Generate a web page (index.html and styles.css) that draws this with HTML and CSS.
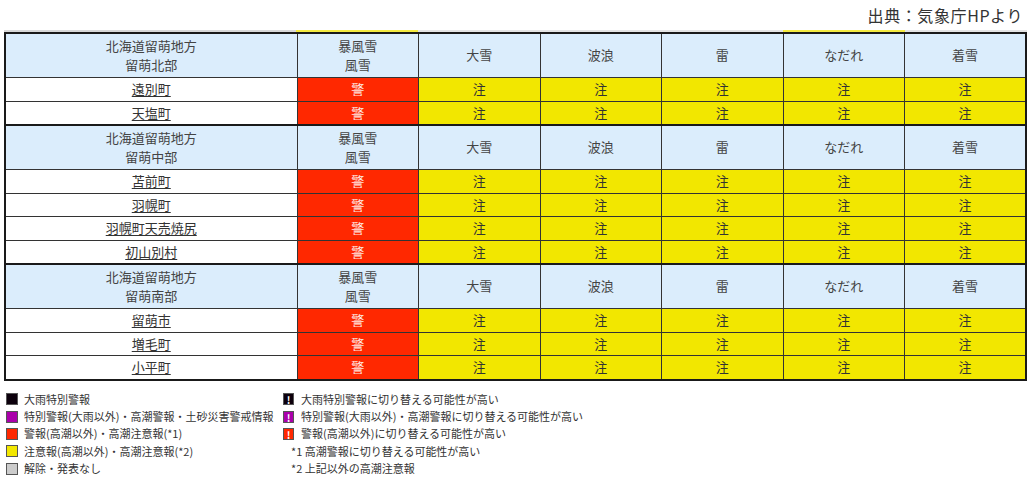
FILE: index.html
```html
<!DOCTYPE html>
<html lang="ja">
<head>
<meta charset="utf-8">
<link rel="stylesheet" href="styles.css">
</head>
<body>
<div class="page">
  <div class="source">出典：気象庁HPより</div>
  <div class="strip">
    <span class="s1"></span><span class="s2 y"></span><span class="s3"></span><span class="s3"></span><span class="s3"></span><span class="s2 y"></span><span class="s3"></span>
  </div>
  <table class="wt">
    <colgroup><col class="c-area"><col><col><col><col><col><col></colgroup>
    <tbody>
      <tr class="hd first">
        <td>北海道留萌地方<br>留萌北部</td><td>暴風雪<br>風雪</td><td>大雪</td><td>波浪</td><td>雷</td><td>なだれ</td><td>着雪</td>
      </tr>
      <tr class="row"><td class="town"><a>遠別町</a></td><td class="w">警</td><td class="a">注</td><td class="a">注</td><td class="a">注</td><td class="a">注</td><td class="a">注</td></tr>
      <tr class="row"><td class="town"><a>天塩町</a></td><td class="w">警</td><td class="a">注</td><td class="a">注</td><td class="a">注</td><td class="a">注</td><td class="a">注</td></tr>
      <tr class="hd">
        <td>北海道留萌地方<br>留萌中部</td><td>暴風雪<br>風雪</td><td>大雪</td><td>波浪</td><td>雷</td><td>なだれ</td><td>着雪</td>
      </tr>
      <tr class="row"><td class="town"><a>苫前町</a></td><td class="w">警</td><td class="a">注</td><td class="a">注</td><td class="a">注</td><td class="a">注</td><td class="a">注</td></tr>
      <tr class="row"><td class="town"><a>羽幌町</a></td><td class="w">警</td><td class="a">注</td><td class="a">注</td><td class="a">注</td><td class="a">注</td><td class="a">注</td></tr>
      <tr class="row"><td class="town"><a>羽幌町天売焼尻</a></td><td class="w">警</td><td class="a">注</td><td class="a">注</td><td class="a">注</td><td class="a">注</td><td class="a">注</td></tr>
      <tr class="row"><td class="town"><a>初山別村</a></td><td class="w">警</td><td class="a">注</td><td class="a">注</td><td class="a">注</td><td class="a">注</td><td class="a">注</td></tr>
      <tr class="hd">
        <td>北海道留萌地方<br>留萌南部</td><td>暴風雪<br>風雪</td><td>大雪</td><td>波浪</td><td>雷</td><td>なだれ</td><td>着雪</td>
      </tr>
      <tr class="row"><td class="town"><a>留萌市</a></td><td class="w">警</td><td class="a">注</td><td class="a">注</td><td class="a">注</td><td class="a">注</td><td class="a">注</td></tr>
      <tr class="row"><td class="town"><a>増毛町</a></td><td class="w">警</td><td class="a">注</td><td class="a">注</td><td class="a">注</td><td class="a">注</td><td class="a">注</td></tr>
      <tr class="row"><td class="town"><a>小平町</a></td><td class="w">警</td><td class="a">注</td><td class="a">注</td><td class="a">注</td><td class="a">注</td><td class="a">注</td></tr>
    </tbody>
  </table>
  <div class="legend">
    <ul class="lg-col left">
      <li><span class="sw k"></span>大雨特別警報</li>
      <li><span class="sw p"></span>特別警報(大雨以外)・高潮警報・土砂災害警戒情報</li>
      <li><span class="sw r"></span>警報(高潮以外)・高潮注意報(*1)</li>
      <li><span class="sw yl"></span>注意報(高潮以外)・高潮注意報(*2)</li>
      <li><span class="sw g"></span>解除・発表なし</li>
    </ul>
    <ul class="lg-col right">
      <li><span class="ex k">!</span>大雨特別警報に切り替える可能性が高い</li>
      <li><span class="ex p">!</span>特別警報(大雨以外)・高潮警報に切り替える可能性が高い</li>
      <li><span class="ex r">!</span>警報(高潮以外)に切り替える可能性が高い</li>
      <li class="note">*1 高潮警報に切り替える可能性が高い</li>
      <li class="note">*2 上記以外の高潮注意報</li>
    </ul>
  </div>
</div>
</body>
</html>
```

FILE: styles.css
```css
html, body {
  margin: 0;
  padding: 0;
  background: #fff;
}
body {
  font-family: "Noto Sans CJK JP", "Noto Sans", sans-serif;
  color: #333;
}
.page {
  width: 1031px;
}
.source {
  height: 30px;
  box-sizing: border-box;
  padding: 4px 8px 0 0;
  text-align: right;
  font-size: 16px;
  line-height: 22px;
  color: #333;
  letter-spacing: 0.6px;
}
.strip {
  display: flex;
  margin-left: 4px;
  width: 1023px;
  height: 2px;
}
.strip span {
  display: block;
  height: 2px;
  background: #e4e4e4;
}
.strip .s1 { width: 292px; background: #d8d8d8; }
.strip .s2 { width: 122px; }
.strip .s3 { width: 122px; }
.strip .y { background: #f4ea40; }

.wt {
  margin-left: 4px;
  width: 1023px;
  border-collapse: collapse;
  table-layout: fixed;
  border: 2px solid #1a1a1a;
  font-size: 13px;
}
.wt .c-area { width: 292px; }
.wt td {
  border: 1px solid #333;
  text-align: center;
  vertical-align: middle;
  padding: 0;
  line-height: 18.5px;
}
.wt tr.hd td {
  background: #dbedfc;
  color: #444;
  height: 43px;
  border-top: 2px solid #1a1a1a;
}
.wt tr.hd.first td {
  border-top: 2px solid #1a1a1a;
}
.wt tr.row td {
  height: 22.5px;
  border-top: 1px solid #444;
}
.wt td.town {
  background: #fff;
}
.wt td.town a {
  color: #333;
  text-decoration: underline;
  text-underline-offset: 2px;
}
.wt td.w {
  background: #ff2800;
  color: #ffe6e0;
}
.wt td.a {
  background: #f2e700;
  color: #333;
}

.legend {
  display: flex;
  padding: 10px 0 0 6px;
  font-size: 11px;
  color: #333;
}
.lg-col {
  list-style: none;
  margin: 0;
  padding: 0;
}
.lg-col li {
  display: flex;
  align-items: center;
  height: 17.4px;
  line-height: 17px;
  white-space: nowrap;
}
.lg-col.left {
  width: 277px;
}
.sw {
  display: inline-block;
  box-sizing: border-box;
  width: 12px;
  height: 12px;
  margin-right: 6px;
  border: 1px solid #555;
}
.k { background: #0c000c; }
.p { background: #aa00aa; }
.r { background: #ff2800; }
.yl { background: #f2e700; }
.g { background: #ccc; }
.ex {
  display: inline-block;
  box-sizing: border-box;
  width: 11px;
  height: 12px;
  margin-right: 7px;
  color: #fff;
  font-weight: bold;
  font-size: 10px;
  line-height: 12px;
  text-align: center;
  border: 1px solid #555;
}
.lg-col li.note {
  padding-left: 8px;
}
```
